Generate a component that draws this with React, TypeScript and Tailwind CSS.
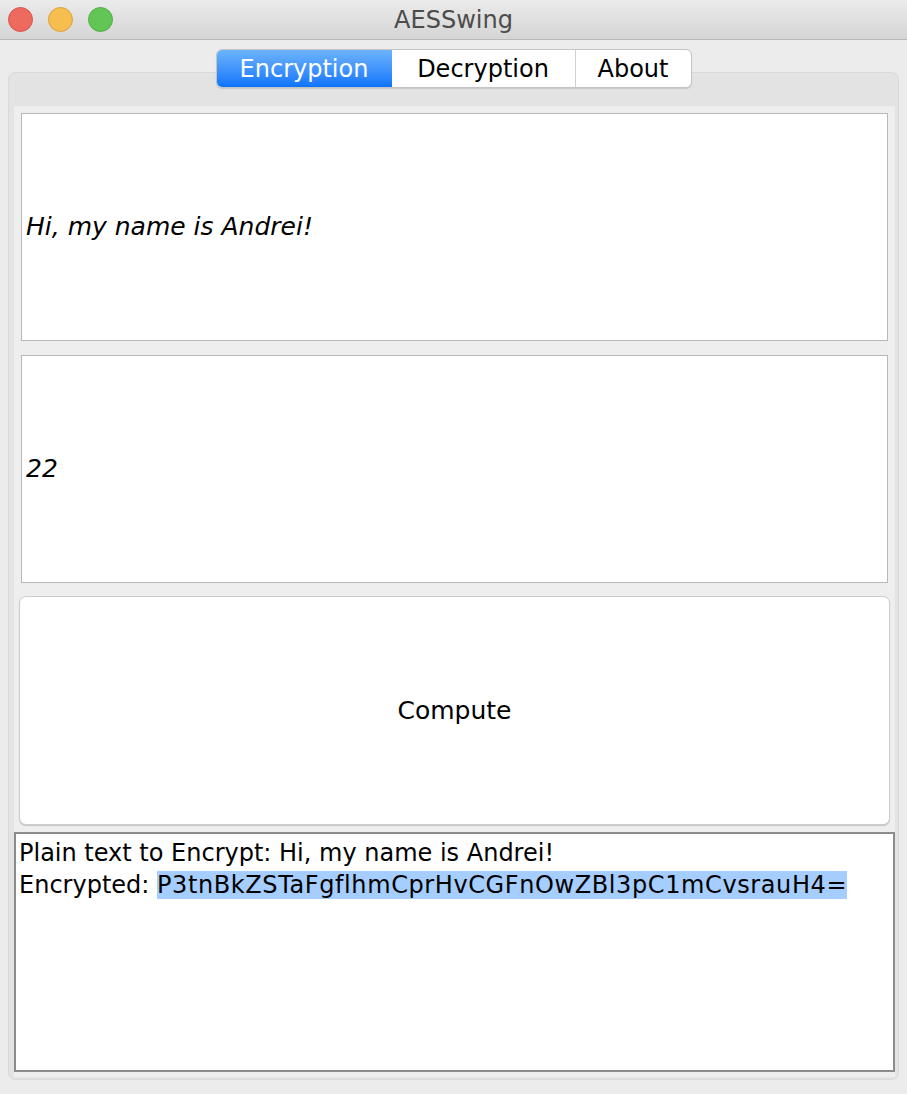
const font = { fontFamily: '"DejaVu Sans", "Liberation Sans", sans-serif' };

function TrafficLights() {
  return (
    <div className="absolute left-[8px] top-[7px] flex gap-[15px]">
      <div className="w-[25px] h-[25px] rounded-full bg-[#ee6a5f] border border-[#d4564c]" />
      <div className="w-[25px] h-[25px] rounded-full bg-[#f5be4f] border border-[#d9a23d]" />
      <div className="w-[25px] h-[25px] rounded-full bg-[#62c655] border border-[#4fae45]" />
    </div>
  );
}

function Tabs() {
  return (
    <div className="relative z-10 flex justify-center">
      <div className="flex h-[39px] rounded-[6px] border border-[#c4c4c4] bg-white shadow-[0_1px_1px_rgba(0,0,0,0.12)] overflow-hidden text-[24px] text-black">
        <div className="w-[175px] flex items-center justify-center text-white bg-gradient-to-b from-[#6cb3fa] to-[#0b74fe]">Encryption</div>
        <div className="w-[184px] flex items-center justify-center border-r border-[#d0d0d0]">Decryption</div>
        <div className="w-[115px] flex items-center justify-center">About</div>
      </div>
    </div>
  );
}

export default function App() {
  return (
    <div className="w-[907px] h-[1094px] bg-[#ececec] flex flex-col overflow-hidden" style={font}>
      <div className="relative h-[40px] shrink-0 bg-gradient-to-b from-[#ebebeb] to-[#d5d5d5] border-b border-[#b9b9b9] flex items-center justify-center">
        <TrafficLights />
        <span className="text-[24px] text-[#4c4c4c]">AESSwing</span>
      </div>

      <div className="px-[8px] pt-[9px]">
        <Tabs />
        <div className="mt-[-16px] h-[1008px] rounded-[7px] bg-[#e3e3e3] border border-[#d9d9d9] pt-[33px] pl-[5px] pr-[3px] pb-[2px]">
          <div className="h-full bg-[#eeeeee] flex flex-col pt-[7px]">
            <div className="mx-[7px] h-[228px] bg-white border border-[#b8b8b8] flex items-center px-[4px] italic text-[25px] text-black">
              Hi, my name is Andrei!
            </div>
            <div className="mx-[7px] mt-[14px] h-[228px] bg-white border border-[#b8b8b8] flex items-center px-[4px] italic text-[25px] text-black">
              22
            </div>
            <button className="mx-[5px] mt-[13px] h-[229px] bg-white rounded-[7px] border border-[#cdcdcd] shadow-[0_1px_1px_rgba(0,0,0,0.18)] text-[25px] text-black">
              Compute
            </button>
            <div className="mt-[7px] h-[240px] bg-white border-2 border-[#8c8c8c] px-[3px] pt-[3px] text-[24px] leading-[32px] text-black">
              <div>Plain text to Encrypt: Hi, my name is Andrei!</div>
              <div>
                Encrypted: <span className="bg-[#a5cdfd] tracking-[0.6px]">P3tnBkZSTaFgflhmCprHvCGFnOwZBl3pC1mCvsrauH4=</span>
              </div>
            </div>
          </div>
        </div>
      </div>
    </div>
  );
}
